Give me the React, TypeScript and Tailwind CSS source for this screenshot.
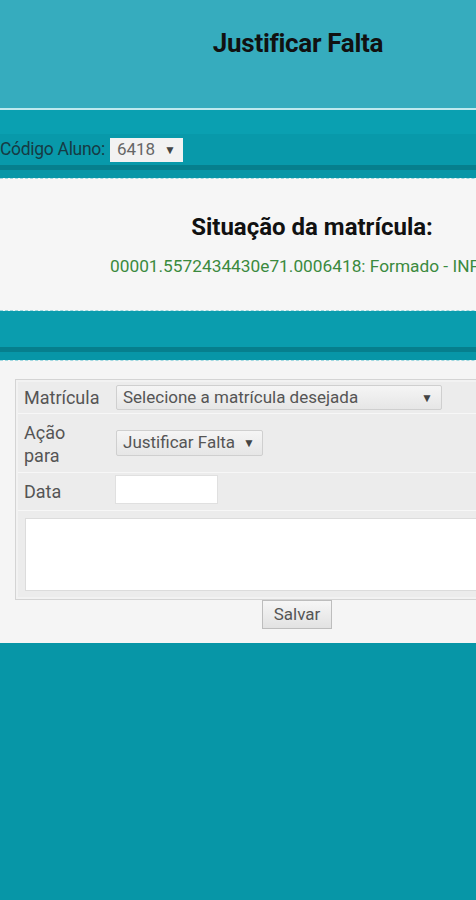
import React from "react";

function Arrow() {
  return <span className="text-[12px] text-[#444] leading-none">▼</span>;
}

export default function App() {
  return (
    <div className="w-[476px] h-[900px] overflow-hidden bg-[#0796a7] font-['Roboto',sans-serif]">
      <div className="w-[640px]">
        {/* header */}
        <div className="h-[108px] w-[596px] bg-[#36acbe] flex justify-center pt-[27px]">
          <h1 className="text-[26px] font-bold text-[#111] leading-[32px] tracking-[-0.3px]">Justificar Falta</h1>
        </div>
        <div className="h-[2px] bg-[#bfe9ee]" />
        <div className="h-[24px] bg-[#0aa0b1]" />
        <div className="h-[31px] bg-[#0899aa] flex items-center">
          <span className="text-[17.5px] text-[#163b44] tracking-[-0.3px]">Código Aluno:</span>
          <div className="ml-[5px] h-[24px] w-[73px] bg-[#f2f2f2] flex items-center justify-between px-[7px]">
            <span className="text-[17px] text-[#666]">6418</span>
            <Arrow />
          </div>
        </div>
        <div className="h-[5px] bg-[#067f8d]" />
        <div className="h-[8px] bg-[#0796a7]" />

        {/* panel 1 */}
        <div className="h-[133px] bg-[#f6f6f6] border-y border-dashed border-[#9fd8df] flex flex-col items-start overflow-hidden">
          <div className="w-[624px] text-center mt-[32px] text-[24px] font-bold text-[#111] leading-[32px]">
            Situação da matrícula:
          </div>
          <div className="ml-[110px] mt-[12px] text-[17.3px] text-[#3b8a3e] whitespace-nowrap leading-[22px]">
            00001.5572434430e71.0006418: Formado - INFORMÁTICA
          </div>
        </div>

        <div className="h-[36px] bg-[#0a9dae]" />
        <div className="h-[5px] bg-[#067f8d]" />
        <div className="h-[8px] bg-[#0796a7]" />

        {/* panel 2 */}
        <div className="h-[283px] bg-[#f5f5f5] border-t border-dashed border-[#9fd8df] pt-[18px] pl-[15px]">
          <div className="border border-[#d4d4d4] bg-[#f2f2f2] p-[2px] w-[600px]">
            <div className="flex h-[32px] bg-[#ececec] border-b border-[#f7f7f7]">
              <div className="w-[92px] pl-[6px] flex items-center text-[18px] text-[#555]">Matrícula</div>
              <div className="flex items-center pl-[6px]">
                <div className="h-[25px] w-[326px] bg-gradient-to-b from-[#f5f5f5] to-[#e6e6e6] border border-[#cfcfcf] rounded-[2px] flex items-center justify-between pl-[6px] pr-[8px]">
                  <span className="text-[17px] text-[#555]">Selecione a matrícula desejada</span>
                  <Arrow />
                </div>
              </div>
            </div>
            <div className="flex h-[59px] bg-[#ececec] border-b border-[#f7f7f7]">
              <div className="w-[92px] pl-[6px] pt-[7px] text-[18px] text-[#555] leading-[23px]">
                Ação<br />para
              </div>
              <div className="flex items-center pl-[6px]">
                <div className="h-[26px] w-[147px] bg-gradient-to-b from-[#f5f5f5] to-[#e6e6e6] border border-[#cfcfcf] rounded-[2px] flex items-center justify-between pl-[6px] pr-[7px]">
                  <span className="text-[17px] text-[#555]">Justificar Falta</span>
                  <Arrow />
                </div>
              </div>
            </div>
            <div className="flex h-[38px] bg-[#ececec] border-b border-[#f7f7f7]">
              <div className="w-[92px] pl-[6px] flex items-center text-[18px] text-[#555]">Data</div>
              <div className="flex items-start pl-[5px] pt-[2px]">
                <div className="h-[29px] w-[103px] bg-white border border-[#e0e0e0]" />
              </div>
            </div>
            <div className="bg-[#ececec] pl-[7px] pt-[7px] pb-[6px]">
              <div className="h-[73px] bg-white border border-[#dcdcdc]" />
            </div>
          </div>
          <div className="w-[576px] flex justify-center">
            <button className="ml-[-12px] h-[29px] w-[70px] bg-gradient-to-b from-[#f6f6f6] to-[#e2e2e2] border border-[#bdbdbd] text-[17px] text-[#555]">
              Salvar
            </button>
          </div>
        </div>
      </div>
    </div>
  );
}
